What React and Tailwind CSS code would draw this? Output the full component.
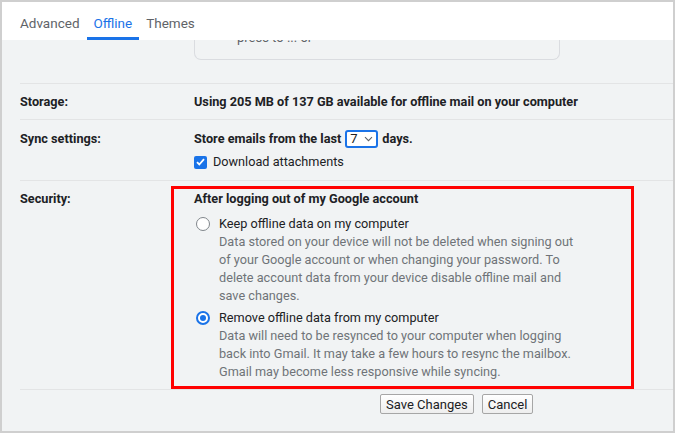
import React from 'react';

const font = { fontFamily: 'Roboto, "Liberation Sans", Arial, sans-serif' };

const Radio = ({ checked }) => (
  <span
    className={
      'mt-[2px] w-[14px] h-[14px] rounded-full border flex items-center justify-center flex-shrink-0 bg-white ' +
      (checked ? 'border-[#1a73e8] border-2' : 'border-[#80868b]')
    }
  >
    {checked && <span className="w-[6px] h-[6px] rounded-full bg-[#1a73e8]" />}
  </span>
);

const App = () => {
  return (
    <div
      className="relative w-[675px] h-[433px] border-2 border-[#cfcfcf] bg-[#f1f3f4] overflow-hidden text-[#202124]"
      style={font}
    >
      {/* Tabs header */}
      <div className="relative z-10 h-[38px] bg-white flex items-stretch pl-[11px] text-[13.5px]">
        <div className="px-[7px] pt-[4px] flex items-center text-[#5f6368]">Advanced</div>
        <div className="px-[7px] pt-[7px] flex items-center text-[#1a73e8] border-b-[3px] border-[#1a73e8]">Offline</div>
        <div className="px-[7px] pt-[4px] flex items-center text-[#5f6368]">Themes</div>
      </div>

      {/* Scrolled-under box */}
      <div className="ml-[192px] w-[366px] h-[20px] border border-t-0 border-[#dadce0] rounded-b-[7px] overflow-hidden">
        <div className="-mt-[9px] pl-[42px] text-[13px] text-[#5f6368] leading-[14px]">press to ... or</div>
      </div>

      {/* Settings rows */}
      <div className="ml-[18px] mt-[23px] text-[12.7px]">
        <div className="border-t border-[#e3e4e5] h-[36px] flex items-center font-bold">
          <div className="w-[174px]">Storage:</div>
          <div>Using 205 MB of 137 GB available for offline mail on your computer</div>
        </div>

        <div className="border-t border-[#e3e4e5] flex pt-[10px] pb-[9px]">
          <div className="w-[174px] font-bold leading-[18px]">Sync settings:</div>
          <div>
            <div className="flex items-center h-[18px] font-bold">
              <span>Store emails from the last</span>
              <span className="mx-[4px] w-[33px] h-[18px] border-2 border-[#1a73e8] rounded-[3px] bg-white flex items-center justify-between pl-[3px] pr-[3px] font-normal text-[13px]">
                <span>7</span>
                <svg width="9" height="6" viewBox="0 0 9 6" fill="none" stroke="#5f6368" strokeWidth="1.1">
                  <path d="M1 1.2l3.5 3.5L8 1.2" />
                </svg>
              </span>
              <span>days.</span>
            </div>
            <div className="flex items-center h-[18px] mt-[5px]">
              <span className="w-[13px] h-[13px] rounded-[2px] bg-[#1a73e8] flex items-center justify-center mr-[6px]">
                <svg width="9" height="8" viewBox="0 0 9 8" fill="none" stroke="white" strokeWidth="1.8">
                  <path d="M1 4.2l2.3 2.3L8 1.2" />
                </svg>
              </span>
              <span>Download attachments</span>
            </div>
          </div>
        </div>

        <div className="border-t border-b border-[#e3e4e5] flex pt-[9px] pb-[8px]">
          <div className="w-[174px] font-bold leading-[18px]">Security:</div>
          <div className="leading-[18px]">
            <div className="font-bold">After logging out of my Google account</div>
            <div className="flex gap-[9px] mt-[7px] pl-[2px]">
              <Radio />
              <div>
                <div>Keep offline data on my computer</div>
                <div className="text-[#6f7378]">
                  Data stored on your device will not be deleted when signing out<br />
                  of your Google account or when changing your password. To<br />
                  delete account data from your device disable offline mail and<br />
                  save changes.
                </div>
              </div>
            </div>
            <div className="flex gap-[9px] mt-[4px] pl-[2px]">
              <Radio checked />
              <div>
                <div>Remove offline data from my computer</div>
                <div className="text-[#6f7378]">
                  Data will need to be resynced to your computer when logging<br />
                  back into Gmail. It may take a few hours to resync the mailbox.<br />
                  Gmail may become less responsive while syncing.
                </div>
              </div>
            </div>
          </div>
        </div>
      </div>

      {/* Buttons */}
      <div className="flex gap-[8px] ml-[378px] mt-[4px] text-[13px]">
        <button className="h-[20px] px-[5px] border border-[#a6a6a6] rounded-[2px] bg-gradient-to-b from-white to-[#eeeeee] leading-none">
          Save Changes
        </button>
        <button className="h-[20px] px-[5px] border border-[#a6a6a6] rounded-[2px] bg-gradient-to-b from-white to-[#eeeeee] leading-none">
          Cancel
        </button>
      </div>

      {/* Red highlight annotation */}
      <div className="absolute left-[169px] top-[184px] w-[463px] h-[203px] border-[3px] border-[#ff0000] pointer-events-none" />
    </div>
  );
};

export default App;
